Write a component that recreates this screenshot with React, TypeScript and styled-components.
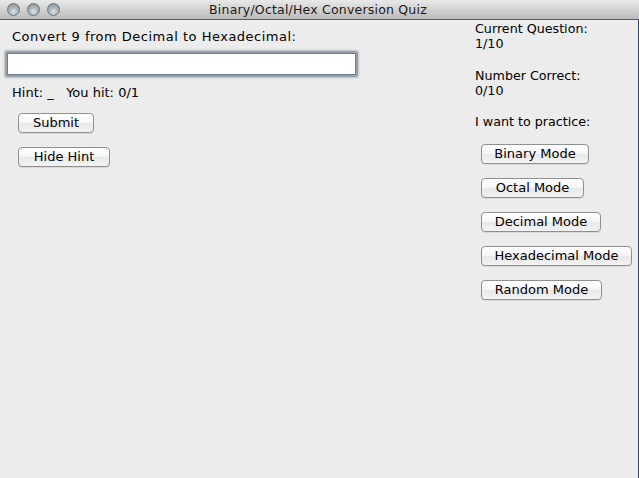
import { FC } from 'react';
import styled, { createGlobalStyle } from 'styled-components';

const GlobalStyle = createGlobalStyle`
  html, body {
    margin: 0;
    padding: 0;
    background: #ececec;
  }
  body {
    font-family: "DejaVu Sans", "Liberation Sans", sans-serif;
    font-size: 13px;
    color: #000000;
  }
`

const Window = styled.div`
  width: 639px;
  height: 478px;
  display: flex;
  flex-direction: column;
  background: #ececec;
  overflow: hidden;
`

const TitleBar = styled.div`
  position: relative;
  height: 19px;
  flex: 0 0 19px;
  display: flex;
  align-items: center;
  justify-content: center;
  background: linear-gradient(#e9e9e9, #d2d2d2 50%, #bababa);
  border-bottom: 1px solid #5f5f5f;
`

const Lights = styled.div`
  position: absolute;
  left: 7px;
  top: 3px;
  display: flex;
  gap: 7px;
`

const Light = styled.span`
  width: 13px;
  height: 13px;
  border-radius: 50%;
  box-sizing: border-box;
  border: 1px solid #6c7378;
  background: radial-gradient(circle at 50% 70%, #dfe6ea 0%, #a9b4ba 45%, #7d8a92 100%);
`

const TitleText = styled.span`
  font-size: 12.5px;
  letter-spacing: 0.2px;
  color: #1a1a1a;
  padding-right: 3px;
`

const Body = styled.div`
  flex: 1;
  display: flex;
  border-right: 1px solid #2c3f6e;
`

const LeftPanel = styled.div`
  width: 470px;
  padding-top: 9px;
  display: flex;
  flex-direction: column;
  align-items: flex-start;
`

const RightPanel = styled.div`
  flex: 1;
  padding-top: 1px;
  display: flex;
  flex-direction: column;
  align-items: flex-start;
  font-size: 12.7px;
`

const Text = styled.div<{ $left?: number; $top?: number; $wide?: boolean }>`
  line-height: 15px;
  white-space: pre;
  letter-spacing: ${p => (p.$wide ? '0.5px' : '0')};
  margin-left: ${p => p.$left ?? 0}px;
  margin-top: ${p => p.$top ?? 0}px;
`

const Field = styled.input`
  box-sizing: border-box;
  width: 349px;
  height: 22px;
  margin: 9px 0 0 7px;
  border: 1px solid #6e7b87;
  border-radius: 1px;
  box-shadow: 0 0 0 2px #95a0ab, 0 0 2px 3px #bcc3ca;
  background: #ffffff;
  outline: none;
  font: inherit;
  padding: 0 3px;
`

const Button = styled.button<{ $width: number; $left: number; $top: number }>`
  box-sizing: border-box;
  width: ${p => p.$width}px;
  height: 20px;
  margin-left: ${p => p.$left}px;
  margin-top: ${p => p.$top}px;
  padding: 0;
  border: 1px solid #8f8f8f;
  border-radius: 4px;
  background: linear-gradient(#ffffff, #f6f6f6 50%, #e8e8e8 51%, #f3f3f3);
  box-shadow: 0 1px 0 rgba(0, 0, 0, 0.08);
  font: inherit;
  font-size: 13px;
  line-height: 18px;
  color: #000000;
  text-align: center;
`

const modes = [
  { label: 'Binary Mode', width: 108 },
  { label: 'Octal Mode', width: 103 },
  { label: 'Decimal Mode', width: 120 },
  { label: 'Hexadecimal Mode', width: 151 },
  { label: 'Random Mode', width: 121 },
];

const App: FC = () => {
  return (
    <>
      <GlobalStyle />
      <Window>
        <TitleBar>
          <Lights>
            <Light />
            <Light />
            <Light />
          </Lights>
          <TitleText>Binary/Octal/Hex Conversion Quiz</TitleText>
        </TitleBar>
        <Body>
          <LeftPanel>
            <Text $left={12} $wide>Convert 9 from Decimal to Hexadecimal:</Text>
            <Field type="text" />
            <Text $left={12} $top={10}>{'Hint: _   You hit: 0/1'}</Text>
            <Button $width={76} $left={18} $top={13}>Submit</Button>
            <Button $width={92} $left={18} $top={14}>Hide Hint</Button>
          </LeftPanel>
          <RightPanel>
            <Text $left={5}>Current Question:</Text>
            <Text $left={5}>1/10</Text>
            <Text $left={5} $top={17}>Number Correct:</Text>
            <Text $left={5}>0/10</Text>
            <Text $left={5} $top={16}>I want to practice:</Text>
            {modes.map((m, i) => (
              <Button key={m.label} $width={m.width} $left={11} $top={i === 0 ? 15 : 14}>
                {m.label}
              </Button>
            ))}
          </RightPanel>
        </Body>
      </Window>
    </>
  )
}

export default App;
